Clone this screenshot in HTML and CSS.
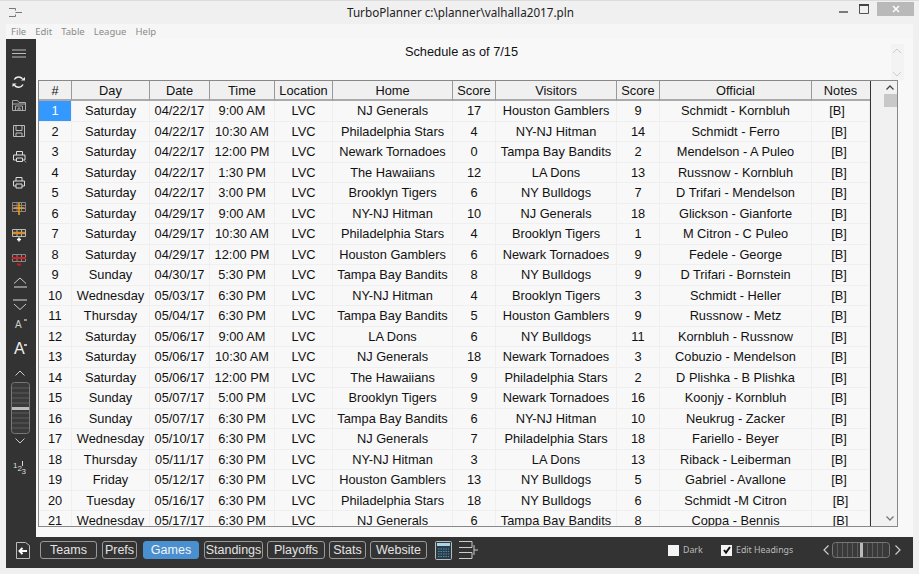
FILE: index.html
```html
<!DOCTYPE html>
<html lang="en">
<head>
<meta charset="utf-8">
<title>TurboPlanner</title>
<link rel="stylesheet" href="styles.css">
</head>
<body>
<div class="window">
  <header class="titlebar">
    <svg class="app-icon" width="20" height="12" viewBox="0 0 20 12"><path d="M1 1.500H7.500V3.500M1 9.500H7.500V7.500M7.500 5.500H14" fill="none" stroke="#777" stroke-width="1"/></svg>
    <div class="title">TurboPlanner c:\planner\valhalla2017.pln</div>
    <div class="winbtns">
      <svg class="winbtn" width="14" height="14" viewBox="0 0 14 14"><path d="M2 10H11" stroke="#555" stroke-width="1.500"/></svg>
      <svg class="winbtn maxbtn" width="14" height="14" viewBox="0 0 14 14"><path d="M3.500 3.500H12.500V11.500H3.500Z" fill="none" stroke="#555"/><path d="M3 3H13" stroke="#444" stroke-width="2"/></svg>
      <div class="closebtn">
        <svg width="10" height="10" viewBox="0 0 10 10"><path d="M2 2L8 8M8 2L2 8" stroke="#fff" stroke-width="1.500"/></svg>
      </div>
    </div>
  </header>
  <nav class="menubar">
    <span>File</span><span>Edit</span><span>Table</span><span>League</span><span>Help</span>
  </nav>
  <div class="middle">
    <aside class="sidebar">
      <svg width="30" height="26" viewBox="6 39 30 26"><path d="M12 50H26M12 53.500H26M12 57H26" stroke="#bbb" stroke-width="1"/></svg>
      <svg width="30" height="28" viewBox="6 65 30 28"><path d="M14.300 79.500A5 5 0 0 1 22.500 78.800M23 84.500A5 5 0 0 1 14.500 85.200" fill="none" stroke="#eee" stroke-width="1.500"/><path d="M21 80.500H25V77ZM16.500 83.500H12.500V87Z" fill="#eee"/></svg>
      <svg width="30" height="25" viewBox="6 93 30 25"><path d="M12.500 110.500V100.500H17.500L19 102.500H25.500V110.500ZM12.500 104H25.500M15.500 110.500V106H22.500V110.500M18 110.500V108H20V110.500" fill="none" stroke="#aaa"/></svg>
      <svg width="30" height="26" viewBox="6 118 30 26"><path d="M13.500 125.500H24.500V136.500H13.500ZM16 125.500V130.500H22V125.500M16 136.500V133H22V136.500" fill="none" stroke="#bbb"/></svg>
      <svg width="30" height="26" viewBox="6 144 30 26"><path d="M16.500 155V151.500H22.500V155M16.500 160H13.500V155H25V160H22.500M16.500 158H22.500V161.500H16.500Z" fill="none" stroke="#ddd"/><path d="M24 160L26 162.500" stroke="#999"/></svg>
      <svg width="30" height="25" viewBox="6 170 30 25"><path d="M16 181V177.500H22V181M16 186H13.500V181H24.500V186H22M16 184H22V188H16Z" fill="none" stroke="#ddd"/></svg>
      <svg width="30" height="25" viewBox="6 195 30 25"><path d="M12.500 202.500H25.500V211.500H12.500ZM12.500 205.500H25.500M12.500 208.500H25.500M17 202.500V211.500M21.500 202.500V211.500" fill="none" stroke="#888"/><path d="M19 202.500V215M13.500 208H24.500" stroke="#f0a020" stroke-width="1.500"/></svg>
      <svg width="30" height="27" viewBox="6 220 30 27"><path d="M12.500 229.500H25.500V236.500H12.500ZM17 229.500V236.500M21.500 229.500V236.500" fill="none" stroke="#bbb"/><path d="M13 233H25" stroke="#d99020" stroke-width="2.500"/><path d="M19 237.500V241.500M17 239.500H21" stroke="#fff" stroke-width="1.500"/></svg>
      <svg width="30" height="24" viewBox="6 247 30 24"><path d="M12.500 254.500H25.500V261.500H12.500ZM17 254.500V261.500M21.500 254.500V261.500" fill="none" stroke="#888"/><path d="M12 258H26" stroke="#e02020" stroke-width="2"/><path d="M17 264.500H21" stroke="#d01818" stroke-width="2"/></svg>
      <svg width="30" height="22" viewBox="6 271 30 22"><path d="M14 283.500L20 278L26 283.500" fill="none" stroke="#ccc"/><path d="M14 287H27" stroke="#888" stroke-width="2"/></svg>
      <svg width="30" height="22" viewBox="6 293 30 22"><path d="M13 300H27" stroke="#888" stroke-width="2"/><path d="M14 304L20 309.500L26 304" fill="none" stroke="#ccc"/></svg>
      <svg width="30" height="20" viewBox="6 315 30 20"><text class="icon-a-small" x="15" y="328">A</text><path d="M24 320H27" stroke="#ddd" stroke-width="1.200"/></svg>
      <svg width="30" height="25" viewBox="6 335 30 25"><text class="icon-a-big" x="14" y="354">A</text><path d="M24 345H27" stroke="#eee" stroke-width="1.500"/></svg>
      <svg width="30" height="20" viewBox="6 360 30 20"><path d="M15.500 375.500L20 371L24.500 375.500" fill="none" stroke="#ccc"/></svg>
      <svg width="30" height="55" viewBox="6 380 30 55"><rect x="11.500" y="382.500" width="18" height="51" rx="3" fill="#3a3a3a" stroke="#777"/><path d="M12 388H29M12 393H29M12 398H29M12 403H29M12 413H29M12 418H29M12 423H29M12 428H29" stroke="#5c5c5c"/><rect x="12" y="407" width="17" height="3" fill="#bbb"/></svg>
      <svg width="30" height="15" viewBox="6 435 30 15"><path d="M15.500 438.500L20 443L24.500 438.500" fill="none" stroke="#ccc"/></svg>
      <svg width="30" height="32" viewBox="6 450 30 32"><text class="icon-num" x="13" y="468">1</text><text class="icon-num" x="17.500" y="471">2</text><text class="icon-num" x="21.500" y="474">3</text><path d="M22.500 461V466" stroke="#ddd"/></svg>
    </aside>
    <main class="content">
      <div class="heading-row">
        <h1 class="heading">Schedule as of 7/15</h1>
        <div class="mini-scroll">
          <svg width="12" height="8" viewBox="0 0 12 8"><path d="M2 6L6 2L10 6" fill="none" stroke="#ccc"/></svg>
          <svg width="12" height="8" viewBox="0 0 12 8"><path d="M2 2L6 6L10 2" fill="none" stroke="#ccc"/></svg>
        </div>
      </div>
      <div class="grid-box">
        <div class="grid-clip">
          <table class="grid">
            <colgroup>
              <col class="c-num"><col class="c-day"><col class="c-date"><col class="c-time"><col class="c-loc"><col class="c-home"><col class="c-score"><col class="c-vis"><col class="c-score"><col class="c-off"><col class="c-notes">
            </colgroup>
            <thead>
              <tr><th>#</th><th>Day</th><th>Date</th><th>Time</th><th>Location</th><th>Home</th><th>Score</th><th>Visitors</th><th>Score</th><th>Official</th><th>Notes</th></tr>
            </thead>
            <tbody>
              <tr><td class="selected">1</td><td>Saturday</td><td>04/22/17</td><td>9:00 AM</td><td>LVC</td><td>NJ Generals</td><td>17</td><td>Houston Gamblers</td><td>9</td><td>Schmidt - Kornbluh</td><td class="n0">[B]</td></tr>
              <tr><td>2</td><td>Saturday</td><td>04/22/17</td><td>10:30 AM</td><td>LVC</td><td>Philadelphia Stars</td><td>4</td><td>NY-NJ Hitman</td><td>14</td><td>Schmidt - Ferro</td><td class="n1">[B]</td></tr>
              <tr><td>3</td><td>Saturday</td><td>04/22/17</td><td>12:00 PM</td><td>LVC</td><td>Newark Tornadoes</td><td>0</td><td>Tampa Bay Bandits</td><td>2</td><td>Mendelson - A Puleo</td><td class="n1">[B]</td></tr>
              <tr><td>4</td><td>Saturday</td><td>04/22/17</td><td>1:30 PM</td><td>LVC</td><td>The Hawaiians</td><td>12</td><td>LA Dons</td><td>13</td><td>Russnow - Kornbluh</td><td class="n1">[B]</td></tr>
              <tr><td>5</td><td>Saturday</td><td>04/22/17</td><td>3:00 PM</td><td>LVC</td><td>Brooklyn Tigers</td><td>6</td><td>NY Bulldogs</td><td>7</td><td>D Trifari - Mendelson</td><td class="n1">[B]</td></tr>
              <tr><td>6</td><td>Saturday</td><td>04/29/17</td><td>9:00 AM</td><td>LVC</td><td>NY-NJ Hitman</td><td>10</td><td>NJ Generals</td><td>18</td><td>Glickson - Gianforte</td><td class="n1">[B]</td></tr>
              <tr><td>7</td><td>Saturday</td><td>04/29/17</td><td>10:30 AM</td><td>LVC</td><td>Philadelphia Stars</td><td>4</td><td>Brooklyn Tigers</td><td>1</td><td>M Citron - C Puleo</td><td class="n1">[B]</td></tr>
              <tr><td>8</td><td>Saturday</td><td>04/29/17</td><td>12:00 PM</td><td>LVC</td><td>Houston Gamblers</td><td>6</td><td>Newark Tornadoes</td><td>9</td><td>Fedele - George</td><td class="n1">[B]</td></tr>
              <tr><td>9</td><td>Sunday</td><td>04/30/17</td><td>5:30 PM</td><td>LVC</td><td>Tampa Bay Bandits</td><td>8</td><td>NY Bulldogs</td><td>9</td><td>D Trifari - Bornstein</td><td class="n1">[B]</td></tr>
              <tr><td>10</td><td>Wednesday</td><td>05/03/17</td><td>6:30 PM</td><td>LVC</td><td>NY-NJ Hitman</td><td>4</td><td>Brooklyn Tigers</td><td>3</td><td>Schmidt - Heller</td><td class="n1">[B]</td></tr>
              <tr><td>11</td><td>Thursday</td><td>05/04/17</td><td>6:30 PM</td><td>LVC</td><td>Tampa Bay Bandits</td><td>5</td><td>Houston Gamblers</td><td>9</td><td>Russnow - Metz</td><td class="n1">[B]</td></tr>
              <tr><td>12</td><td>Saturday</td><td>05/06/17</td><td>9:00 AM</td><td>LVC</td><td>LA Dons</td><td>6</td><td>NY Bulldogs</td><td>11</td><td>Kornbluh - Russnow</td><td class="n1">[B]</td></tr>
              <tr><td>13</td><td>Saturday</td><td>05/06/17</td><td>10:30 AM</td><td>LVC</td><td>NJ Generals</td><td>18</td><td>Newark Tornadoes</td><td>3</td><td>Cobuzio - Mendelson</td><td class="n1">[B]</td></tr>
              <tr><td>14</td><td>Saturday</td><td>05/06/17</td><td>12:00 PM</td><td>LVC</td><td>The Hawaiians</td><td>9</td><td>Philadelphia Stars</td><td>2</td><td>D Plishka - B Plishka</td><td class="n1">[B]</td></tr>
              <tr><td>15</td><td>Sunday</td><td>05/07/17</td><td>5:00 PM</td><td>LVC</td><td>Brooklyn Tigers</td><td>9</td><td>Newark Tornadoes</td><td>16</td><td>Koonjy - Kornbluh</td><td class="n1">[B]</td></tr>
              <tr><td>16</td><td>Sunday</td><td>05/07/17</td><td>6:30 PM</td><td>LVC</td><td>Tampa Bay Bandits</td><td>6</td><td>NY-NJ Hitman</td><td>10</td><td>Neukrug - Zacker</td><td class="n1">[B]</td></tr>
              <tr><td>17</td><td>Wednesday</td><td>05/10/17</td><td>6:30 PM</td><td>LVC</td><td>NJ Generals</td><td>7</td><td>Philadelphia Stars</td><td>18</td><td>Fariello - Beyer</td><td class="n1">[B]</td></tr>
              <tr><td>18</td><td>Thursday</td><td>05/11/17</td><td>6:30 PM</td><td>LVC</td><td>NY-NJ Hitman</td><td>3</td><td>LA Dons</td><td>13</td><td>Riback - Leiberman</td><td class="n1">[B]</td></tr>
              <tr><td>19</td><td>Friday</td><td>05/12/17</td><td>6:30 PM</td><td>LVC</td><td>Houston Gamblers</td><td>13</td><td>NY Bulldogs</td><td>5</td><td>Gabriel - Avallone</td><td class="n1">[B]</td></tr>
              <tr><td>20</td><td>Tuesday</td><td>05/16/17</td><td>6:30 PM</td><td>LVC</td><td>Philadelphia Stars</td><td>18</td><td>NY Bulldogs</td><td>6</td><td>Schmidt -M Citron</td><td class="n2">[B]</td></tr>
              <tr><td>21</td><td>Wednesday</td><td>05/17/17</td><td>6:30 PM</td><td>LVC</td><td>NJ Generals</td><td>6</td><td>Tampa Bay Bandits</td><td>8</td><td>Coppa - Bennis</td><td class="n2">[B]</td></tr>
            </tbody>
          </table>
        </div>
        <div class="vscroll">
          <svg class="vs-arrow" width="26" height="13" viewBox="0 0 26 13"><path d="M15.500 8.500L19 5L22.500 8.500" fill="none" stroke="#444" stroke-width="1.300"/></svg>
          <div class="vs-thumb"></div>
          <svg class="vs-arrow vs-bottom" width="26" height="14" viewBox="0 0 26 14"><path d="M15.500 4.500L19 8L22.500 4.500" fill="none" stroke="#777" stroke-width="1.300"/></svg>
        </div>
      </div>
    </main>
  </div>
  <footer class="bottombar">
    <svg class="back-icon" width="16" height="20" viewBox="0 0 16 20"><path d="M1.500 2.500H10.500L14.500 5.500V18.500H1.500Z" fill="none" stroke="#bbb"/><path d="M12 11H5M7.500 8L4.500 11L7.500 14" fill="none" stroke="#fff" stroke-width="2"/></svg>
    <div class="tabs">
      <button class="tab t-teams">Teams</button>
      <button class="tab t-prefs">Prefs</button>
      <button class="tab t-games active">Games</button>
      <button class="tab t-standings">Standings</button>
      <button class="tab t-playoffs">Playoffs</button>
      <button class="tab t-stats">Stats</button>
      <button class="tab t-website">Website</button>
    </div>
    <svg class="calc-icon" width="18" height="19" viewBox="0 0 18 19"><rect x="0.500" y="0.500" width="16" height="18" rx="1" fill="#2a3c48" stroke="#bbb"/><rect x="2" y="2" width="13" height="3" fill="#a8d4e4"/><path d="M3 8H14M3 10.500H14M3 13H14M3 15.500H14" stroke="#4a90b8" stroke-width="1.200" stroke-dasharray="1.500 1"/></svg>
    <svg class="bracket-icon" width="20" height="20" viewBox="0 0 20 20"><path d="M0 1.500H13V7.500H0M0 12.500H13V18.500H0M15 5V15M15 10H19" fill="none" stroke="#ccc"/></svg>
    <label class="check check-dark"><span class="box"></span>Dark</label>
    <label class="check check-edit"><span class="box"><svg width="10" height="10" viewBox="0 0 10 10"><path d="M2 5L4 7.500L8 2" fill="none" stroke="#111" stroke-width="2"/></svg></span>Edit Headings</label>
    <div class="hslider">
      <svg width="9" height="12" viewBox="0 0 9 12"><path d="M6.500 1.500L2 6L6.500 10.500" fill="none" stroke="#ccc" stroke-width="1.200"/></svg>
      <svg width="60" height="18" viewBox="0 0 60 18"><rect x="0.500" y="1.500" width="57" height="15" rx="3" fill="#3a3a3a" stroke="#777"/><path d="M5.500 2V16M10.500 2V16M15.500 2V16M20.500 2V16M25.500 2V16M35.500 2V16M40.500 2V16M45.500 2V16M50.500 2V16" stroke="#5c5c5c"/><rect x="28" y="2" width="3" height="14" fill="#bbb"/></svg>
      <svg width="9" height="12" viewBox="0 0 9 12"><path d="M2.500 1.500L7 6L2.500 10.500" fill="none" stroke="#ccc" stroke-width="1.200"/></svg>
    </div>
  </footer>
</div>
</body>
</html>
```

FILE: styles.css
```css
* { box-sizing: border-box; }
html, body { margin: 0; padding: 0; }
body { width: 919px; height: 574px; overflow: hidden; background: #f0f0f0; font-family: "Liberation Sans", Arial, sans-serif; }
.window { display: flex; flex-direction: column; height: 574px; border-top: 1px solid #dcdcdc; }
.titlebar { height: 23px; display: flex; align-items: center; padding-left: 8px; flex: none; }
.app-icon { flex: none; }
.title { flex: 1; text-align: center; font: 11.700px "Noto Sans", sans-serif; color: #222; padding: 0 0 2px 56px; }
.winbtns { display: flex; align-items: flex-start; height: 23px; padding-right: 5px; }
.winbtn { margin-top: 1px; }
.maxbtn { margin-left: 5px; margin-right: 7px; }
.closebtn { width: 37px; height: 14px; margin-top: 1px; background: #b9b9b9; display: flex; align-items: center; justify-content: center; }
.menubar { height: 15px; margin: 0 6px; background: #f6f6f6; display: flex; flex: none; padding-left: 5px; gap: 9px; font: 9.500px/15px "Noto Sans", sans-serif; color: #8a8a8a; }
.middle { display: flex; margin: 0 6px; height: 498px; flex: none; }
.sidebar { width: 30px; background: #333; flex: none; display: flex; flex-direction: column; }
.sidebar svg { display: block; flex: none; }
.icon-a-small { font: 10px "Liberation Sans", sans-serif; fill: #ccc; }
.icon-a-big { font: 16px "Liberation Sans", sans-serif; fill: #eee; }
.icon-num { font: 8px "Liberation Sans", sans-serif; fill: #ddd; }
.content { flex: 1; background: #f8f8f8; padding: 0 9px 0 2px; display: flex; flex-direction: column; }
.heading-row { height: 41px; display: flex; flex: none; }
.heading { flex: 1; margin: 0; padding: 5px 6px 0 0; text-align: center; font: 400 12.800px/15px "Liberation Sans", sans-serif; color: #111; }
.mini-scroll { width: 13px; height: 36px; margin-top: 5px; background: #f3f3f3; display: flex; flex-direction: column; justify-content: space-between; padding: 3px 0 2px; }
.grid-box { display: flex; height: 447px; width: 860px; border: 1px solid #888; flex: none; background: #f8f8f8; }
.grid-clip { width: 832px; height: 445px; overflow: hidden; flex: none; border-right: 1px solid #333; }
.grid { table-layout: fixed; border-collapse: separate; border-spacing: 0; width: 831px; font: 12.800px "Liberation Sans", sans-serif; color: #111; }
.c-num { width: 33px; } .c-day { width: 78px; } .c-date { width: 60px; } .c-time { width: 65px; } .c-loc { width: 58px; }
.c-home { width: 120px; } .c-score { width: 43px; } .c-vis { width: 121px; } .c-off { width: 152px; } .c-notes { width: 58px; }
.grid th { height: 20px; font-weight: 400; padding: 0; background: #f0f0f0; border-right: 1px solid #999; border-bottom: 2px solid #aaa; text-align: center; }
.grid th:last-child { border-right: none; padding-right: 1px; }
.grid td { height: 20.500px; padding: 0; text-align: center; border-bottom: 1px solid #efefef; border-right: 1px solid #efefef; white-space: nowrap; overflow: hidden; }
.grid td.selected { background: #3399ff; color: #fff; }
.grid td.n0 { padding-right: 7px; }
.grid td.n1 { padding-right: 3px; }
.vscroll { flex: 1; display: flex; flex-direction: column; background: #f1f1f1; }
.vs-thumb { height: 13px; margin-left: 13px; width: 13px; background: #c8c8c8; flex: none; }
.vs-arrow { display: block; flex: none; }
.vs-bottom { margin-top: auto; }
.bottombar { height: 31px; margin: 0 6px; background: #333; display: flex; align-items: center; flex: none; padding: 0 0 5px 9px; }
.back-icon { flex: none; }
.tabs { display: flex; margin-left: 9px; }
.tab { height: 18px; padding: 0; margin: 0; border: 1px solid #999; border-radius: 3px; background: transparent; color: #e4e4e4; font: 12.500px/16px "Liberation Sans", sans-serif; flex: none; }
.tab.active { background: #4a8fd0; border-color: #4a8fd0; color: #f4f4f4; }
.t-teams { width: 57px; margin-right: 5px; }
.t-prefs { width: 35px; margin-right: 6px; }
.t-games { width: 56px; margin-right: 5px; }
.t-standings { width: 59px; margin-right: 4px; }
.t-playoffs { width: 58px; margin-right: 4px; }
.t-stats { width: 37px; margin-right: 4px; }
.t-website { width: 57px; }
.calc-icon { margin-left: 8px; flex: none; }
.bracket-icon { margin-left: 6px; flex: none; }
.check { display: flex; align-items: center; color: #bbb; font: 8.800px "Noto Sans", sans-serif; flex: none; }
.check-dark { margin-left: 189px; width: 53px; }
.check-edit { width: 96px; }
.box { width: 11px; height: 11px; background: #f4f4f4; margin-right: 4px; display: flex; align-items: center; justify-content: center; flex: none; }
.hslider { display: flex; align-items: center; margin-left: 5px; gap: 1px; flex: none; }
```
